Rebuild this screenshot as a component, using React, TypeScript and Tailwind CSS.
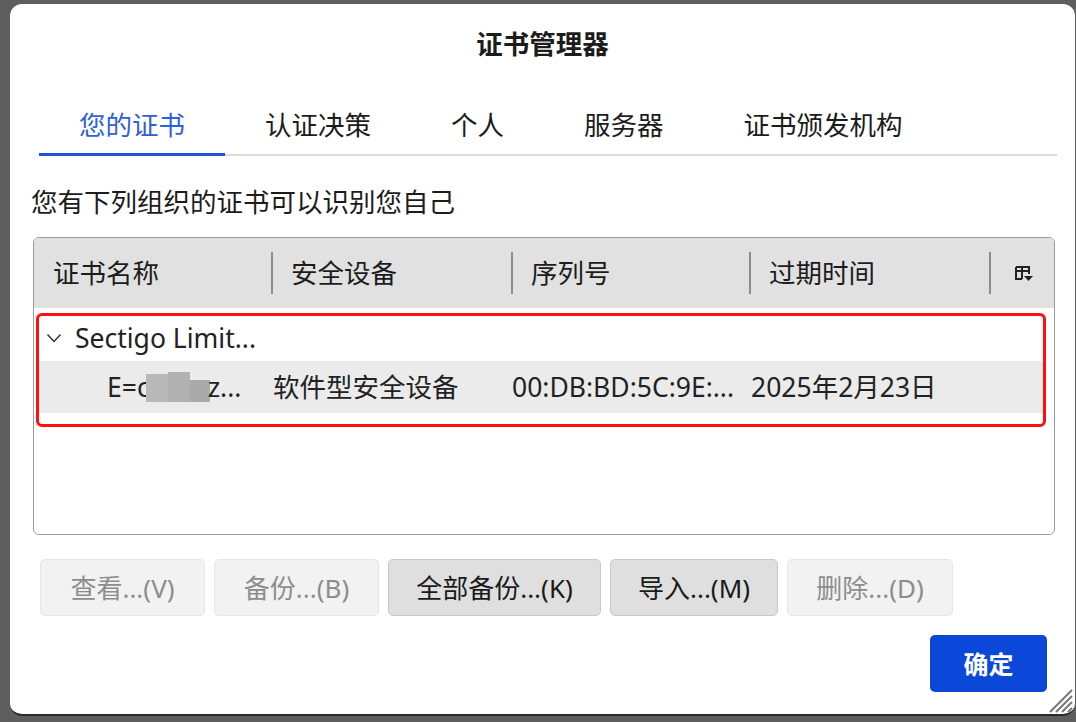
import React from "react";

const font = { fontFamily: '"Noto Sans","Noto Sans CJK SC",sans-serif' };

function ColIcon() {
  return (
    <svg width="22" height="22" viewBox="0 0 22 22" fill="none">
      <path d="M4 5h13v7" stroke="#222" strokeWidth="2" />
      <path d="M4 5v12h6" stroke="#222" strokeWidth="2" />
      <path d="M4 9h13" stroke="#222" strokeWidth="2" />
      <path d="M10 5v12" stroke="#222" strokeWidth="2" />
      <path d="M12 14h9l-4.5 5z" fill="#222" />
    </svg>
  );
}

function Chevron() {
  return (
    <svg width="16" height="12" viewBox="0 0 16 12" fill="none">
      <path d="M1.5 2.5l6.5 7 6.5-7" stroke="#333" strokeWidth="1.5" />
    </svg>
  );
}

export default function App() {
  const tabs = ["您的证书", "认证决策", "个人", "服务器", "证书颁发机构"];
  return (
    <div className="h-[722px] w-[1076px] overflow-hidden bg-[#5e5e5e] pl-[10px] pt-[4px]" style={font}>
      <div className="relative flex h-[712px] w-[1065px] flex-col rounded-[12px] border-b-2 border-[#2a2a2a] bg-white text-[#1c1c1c]">
        <div className="pt-[23px] text-center text-[26.5px] font-bold leading-[34px]">证书管理器</div>

        <div className="ml-[29px] mr-[18px] mt-[47px] flex border-b-2 border-[#dcdcde]">
          {tabs.map((t, i) => (
            <div
              key={t}
              className={
                i === 0
                  ? "-mb-[2px] border-b-[3px] border-[#1e55d6] px-10 pb-[11px] text-[26.5px] leading-[34px] text-[#2f5fd9]"
                  : "-mb-[2px] border-b-[3px] border-transparent px-10 pb-[11px] text-[26.5px] leading-[34px]"
              }
            >
              {t}
            </div>
          ))}
        </div>

        <div className="ml-[21px] mt-[29px] text-[26.5px] leading-[34px]">您有下列组织的证书可以识别您自己</div>

        <div className="ml-[23px] mr-[20px] mt-[18px] flex h-[298px] flex-col overflow-hidden rounded-[6px] border-[1.5px] border-[#9a9a9a]">
          <div className="flex h-[70px] shrink-0 items-center bg-[#e1e1e1] text-[26.5px] leading-[34px]">
            <div className="w-[237px] pl-[19px]">证书名称</div>
            <div className="h-[42px] w-[2px] bg-[#8c8c8c]" />
            <div className="w-[238px] pl-[18px]">安全设备</div>
            <div className="h-[42px] w-[2px] bg-[#8c8c8c]" />
            <div className="w-[236px] pl-[18px]">序列号</div>
            <div className="h-[42px] w-[2px] bg-[#8c8c8c]" />
            <div className="w-[238px] pl-[18px]">过期时间</div>
            <div className="h-[42px] w-[2px] bg-[#8c8c8c]" />
            <div className="flex flex-1 justify-center">
              <ColIcon />
            </div>
          </div>

          <div className="relative ml-[2px] mr-[8px] mt-[5px] h-[114px] text-[26.5px] leading-[34px] text-[#222]">
            <div className="flex h-[48px] items-center pl-[10px] pt-[2px]">
              <Chevron />
              <span className="ml-[13px]">Sectigo Limit...</span>
            </div>
            <div className="flex h-[52px] items-center bg-[#ebebeb]">
              <div className="flex w-[237px] items-center pl-[71px]">
                <span>E=c</span>
                <span className="ml-[-4px] flex h-[30px] items-stretch">
                  <span className="mt-[2px] w-[22px] bg-[#b9b9b9]" />
                  <span className="w-[22px] bg-[#b1b1b1]" />
                  <span className="mt-[8px] w-[20px] bg-[#aaaaaa]" />
                </span>
                <span className="ml-[-2px]">z...</span>
              </div>
              <div className="w-[239px] pl-[0px]">软件型安全设备</div>
              <div className="w-[239px]">00:DB:BD:5C:9E:...</div>
              <div>2025年2月23日</div>
            </div>
            <div className="pointer-events-none absolute inset-0 rounded-[6px] border-[3px] border-[#ff1010]" />
          </div>
        </div>

        <div className="ml-[30px] mt-[24px] flex gap-[9px] text-[26px] leading-[34px]">
          <div className="flex h-[57px] w-[165px] items-center justify-center rounded-[5px] border border-[#e6e6e6] bg-[#f2f2f2] text-[#8d8d8d]">查看...(V)</div>
          <div className="flex h-[57px] w-[165px] items-center justify-center rounded-[5px] border border-[#e6e6e6] bg-[#f2f2f2] text-[#8d8d8d]">备份...(B)</div>
          <div className="flex h-[57px] w-[213px] items-center justify-center rounded-[5px] border border-[#c8c8c8] bg-[#dfdfdf] text-[#1a1a1a]">全部备份...(K)</div>
          <div className="flex h-[57px] w-[168px] items-center justify-center rounded-[5px] border border-[#c8c8c8] bg-[#dfdfdf] text-[#1a1a1a]">导入...(M)</div>
          <div className="flex h-[57px] w-[166px] items-center justify-center rounded-[5px] border border-[#e6e6e6] bg-[#f2f2f2] text-[#8d8d8d]">删除...(D)</div>
        </div>

        <div className="mr-[28px] mt-[19px] flex justify-end">
          <div className="flex h-[57px] w-[117px] items-center justify-center rounded-[5px] bg-[#0b48d9] text-[25px] font-bold leading-[34px] text-white">确定</div>
        </div>

        <svg className="absolute bottom-[1px] right-[2px]" width="26" height="26" viewBox="0 0 26 26">
          <path d="M25 3L3 25M25 9L9 25M25 15L15 25M25 21L21 25" stroke="#777" strokeWidth="2" />
        </svg>
      </div>
    </div>
  );
}
